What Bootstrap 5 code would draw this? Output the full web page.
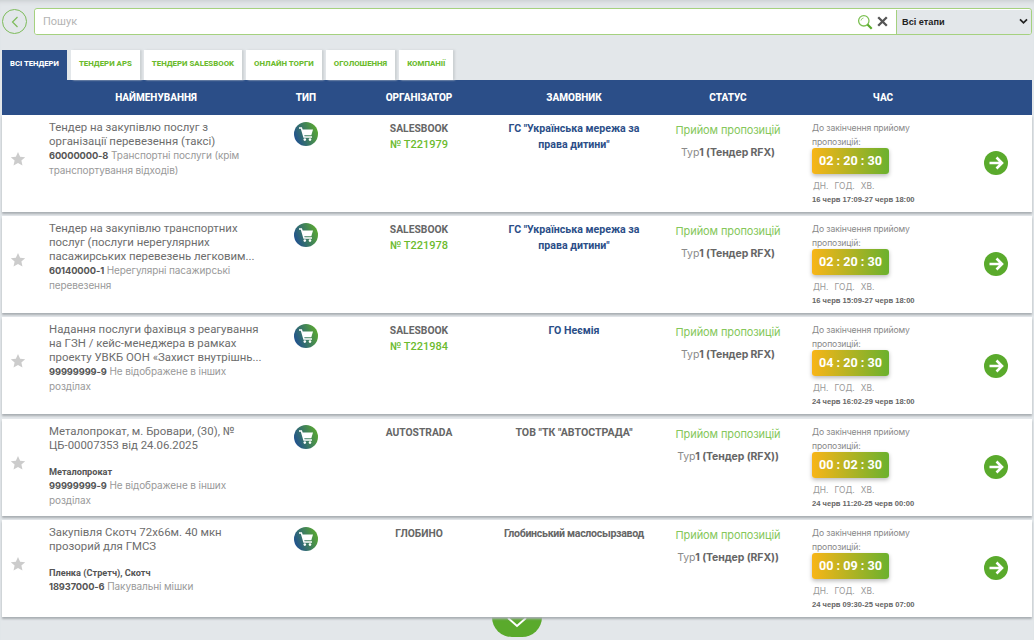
<!doctype html>
<html lang="uk">
<head>
<meta charset="utf-8">
<title>Тендери</title>
<link href="https://cdn.jsdelivr.net/npm/bootstrap@5.3.0/dist/css/bootstrap.min.css" rel="stylesheet">
<style>
html,body{height:640px;overflow:hidden}
body{background:#e3e7ea;font-family:Roboto,sans-serif;color:#666;box-shadow:inset 0 5px 5px -4px #c5c9cc}
.page{padding:8px 2px 0}
.back{width:25px;height:25px;border:1.5px solid #7dbb5a;border-radius:50%;flex:none;margin:1px 7px 0 0;background:transparent;padding:0}
.search{height:27px;border:1.5px solid #a5d17f;border-radius:3px;background:#fff;overflow:hidden}
.search .form-control{border:0;border-radius:0;height:24px;font-size:11px;padding:0 8px;box-shadow:none;font-family:Roboto,sans-serif}
.search .form-control::placeholder{color:#b4b4b4}
.search .form-select{flex:none;width:135px;height:24px;border:0;border-left:1.5px solid #a5d17f;border-radius:0;background-color:#e3e7ea;background-image:url("data:image/svg+xml,%3Csvg xmlns='http://www.w3.org/2000/svg' viewBox='0 0 10 8'%3E%3Cpath d='M1 1.5l4 4 4-4' fill='none' stroke='%23222' stroke-width='2'/%3E%3C/svg%3E");font:700 9.2px "Liberation Sans",sans-serif;color:#222;padding:0 5px;background-position:right 3px center;background-size:9px 7px;box-shadow:none}
.search svg{flex:none}
.tabs{margin-top:15px;gap:4px;height:30px}
.tabs .nav-link{height:30px;padding:0 8px;font:800 7.85px/28px Roboto,sans-serif;color:#6bbb2e;background:#fff;border-radius:0;text-transform:uppercase;box-shadow:2px 0 2px #ccd0d3}
.tabs .nav-link.active{background:#2b4e88;color:#fff;box-shadow:none;padding:0 8px 0 8px;font-size:7.7px}
.thead{height:35px;background:#2b4e88;color:#fff;font-weight:800;font-size:10px;line-height:35px;text-align:center}
.c0{width:38px;flex:none}.c1{width:232px;flex:none}.c2{width:68px;flex:none}.c3{width:158px;flex:none}.c4{width:152px;flex:none}.c5{width:156px;flex:none}.c6{width:154px;flex:none}.c7{flex:1 1 0}
.trow{height:97px;margin-bottom:4.2px;background:#fff;box-shadow:0 2px 2px #a9aeb2}
.star{display:flex;align-items:center;justify-content:center;height:88px;color:#ccc}
.star svg{margin-left:-6px}
.name{padding:5px 0 0 9px;white-space:nowrap;font-size:11.4px;line-height:14px;color:#6d6d6d}
.name .sub{font:700 9.2px/13px Roboto,sans-serif;color:#555;margin-top:13px;display:block}
.cpv{font:400 10px/14px Inter,sans-serif;color:#999;letter-spacing:-.1px;display:block}
.cpv b{color:#555;font-weight:700;font-size:9.3px}
.type{padding:6px 0 0 22px}
.org{text-align:center;padding-top:7px;font-weight:700;font-size:10.3px;line-height:13px;color:#666}
.org span{display:block;margin-top:2px;font-size:11px;line-height:15px;font-weight:500;color:#6cbb2e}
.cust{text-align:center;padding:6px 4px 0;font-weight:700;font-size:10.6px;line-height:16px;color:#2b4e88}
.cust.g{color:#666;white-space:nowrap;padding:6px 0 0}
.cust.tight{letter-spacing:-.3px}
.stat{text-align:center;padding-top:7px}
.stat .st{font:400 11px/16px Inter,sans-serif;color:#85c75a;letter-spacing:-.1px}
.stat .tur{font:400 10.5px/14px Inter,sans-serif;color:#8a8a8a;margin-top:8px;letter-spacing:-.1px}
.stat .tur b{color:#666;font-weight:700}
.time{padding:6px 0 0 6px}
.time p{margin:0;font:400 8.6px/14px Inter,sans-serif;color:#888;white-space:nowrap;letter-spacing:-.1px}
.timer{width:77px;height:26px;margin-top:-1px;border-radius:3px;background:linear-gradient(90deg,#f8b518,#6bb12e);color:#fff;font-weight:700;font-size:12.6px;line-height:26px;text-align:center;box-shadow:0 2px 4px #bbb}
.lbl{font:400 8.4px/12px Inter,sans-serif;color:#999;margin-top:6px;padding-left:1px;white-space:nowrap}
.lbl span{margin-right:6px}
.dates{font:700 7.6px/12px "Liberation Sans",Roboto,sans-serif;color:#666;margin-top:2px;white-space:nowrap}
.go{padding:35.5px 0 0 24px}
.more{width:50px;height:20px;margin:-4px auto 0;background:#5aaa2c;border-radius:0 0 25px 25px;position:relative;z-index:0}
.list{position:relative;z-index:1}
</style>
</head>
<body>
<svg width="0" height="0" class="position-absolute">
<defs>
<linearGradient id="cg" x1="0" y1=".7" x2="1" y2=".3"><stop offset="0" stop-color="#1f4e92"/><stop offset="1" stop-color="#5aa92f"/></linearGradient>
<symbol id="cart" viewBox="0 0 24 24"><circle cx="12" cy="12" r="12" fill="url(#cg)"/><path d="M5 6h2.4l2.6 9h8" fill="none" stroke="#fff" stroke-width="1.5"/><path d="M8 7.5h11l-1.7 5.7H9.6z" fill="#fff"/><circle cx="10.8" cy="17.6" r="1.3" fill="#fff"/><circle cx="16" cy="17.6" r="1.3" fill="#fff"/></symbol>
<symbol id="star" viewBox="0 0 24 24"><path d="M12 1.5l3.2 7 7.6.8-5.7 5.1 1.6 7.5L12 18.1l-6.7 3.8 1.6-7.5L1.2 9.3l7.6-.8z" fill="#ccc"/></symbol>
<symbol id="go" viewBox="0 0 24 24"><circle cx="12" cy="12" r="12" fill="#5aaa2c"/><path d="M5.5 12h12M12.5 6.5l5.5 5.5-5.5 5.5" fill="none" stroke="#fff" stroke-width="2.6"/></symbol>
</defs>
</svg>
<div class="page">
  <div class="d-flex">
    <button class="back d-flex align-items-center justify-content-center" type="button" aria-label="Назад"><svg width="8" height="12" viewBox="0 0 8 12"><path d="M6.5 1L1.5 6l5 5" fill="none" stroke="#7dbb5a" stroke-width="1.2"/></svg></button>
    <div class="search d-flex align-items-center flex-grow-1">
      <input class="form-control" placeholder="Пошук">
      <svg class="me-1" width="16" height="16" viewBox="0 0 16 16"><circle cx="6.8" cy="6.8" r="5.2" fill="none" stroke="#7cc052" stroke-width="1.3"/><path d="M4 6.5A3 3 0 0 1 6.5 4" fill="none" stroke="#9fd47c"/><path d="M10.5 10.5l4.2 4.2" stroke="#5aaa2c" stroke-width="2.2"/></svg>
      <svg class="me-2" width="11" height="11" viewBox="0 0 11 11"><path d="M1.2 1.2l8.6 8.6M9.8 1.2l-8.6 8.6" stroke="#555" stroke-width="2.3"/></svg>
      <select class="form-select"><option>Всі етапи</option></select>
    </div>
  </div>
  <ul class="nav tabs">
    <li class="nav-item"><a class="nav-link active" href="#">Всі тендери</a></li>
    <li class="nav-item"><a class="nav-link" href="#">Тендери APS</a></li>
    <li class="nav-item"><a class="nav-link" href="#">Тендери Salesbook</a></li>
    <li class="nav-item"><a class="nav-link" href="#">Онлайн торги</a></li>
    <li class="nav-item"><a class="nav-link" href="#">Оголошення</a></li>
    <li class="nav-item"><a class="nav-link" href="#">Компанії</a></li>
  </ul>
  <div class="thead d-flex">
    <div class="c0"></div><div class="c1">НАЙМЕНУВАННЯ</div><div class="c2">ТИП</div><div class="c3">ОРГАНІЗАТОР</div><div class="c4">ЗАМОВНИК</div><div class="c5">СТАТУС</div><div class="c6">ЧАС</div><div class="c7"></div>
  </div>
  <div class="list">

  <div class="trow d-flex">
    <div class="c0 star"><svg width="16" height="16"><use href="#star"/></svg></div>
    <div class="c1 name">Тендер на закупівлю послуг з<br>організації перевезення (таксі)<span class="cpv"><b>60000000-8</b> Транспортні послуги (крім<br>транспортування відходів)</span></div>
    <div class="c2 type"><svg width="24" height="24"><use href="#cart"/></svg></div>
    <div class="c3 org">SALESBOOK<span>№ T221979</span></div>
    <div class="c4 cust">ГС "Українська мережа за права дитини"</div>
    <div class="c5 stat"><div class="st">Прийом пропозицій</div><div class="tur">Тур<b>1 (Тендер RFX)</b></div></div>
    <div class="c6 time"><p>До закінчення прийому<br>пропозицій:</p><div class="timer">02 : 20 : 30</div><div class="lbl"><span>ДН.</span><span>ГОД.</span><span>ХВ.</span></div><div class="dates">16 черв 17:09-27 черв 18:00</div></div>
    <div class="c7 go"><svg width="24" height="24"><use href="#go"/></svg></div>
  </div>

  <div class="trow d-flex">
    <div class="c0 star"><svg width="16" height="16"><use href="#star"/></svg></div>
    <div class="c1 name">Тендер на закупівлю транспортних<br>послуг (послуги нерегулярних<br>пасажирських перевезень легковим...<span class="cpv"><b>60140000-1</b> Нерегулярні пасажирські<br>перевезення</span></div>
    <div class="c2 type"><svg width="24" height="24"><use href="#cart"/></svg></div>
    <div class="c3 org">SALESBOOK<span>№ T221978</span></div>
    <div class="c4 cust">ГС "Українська мережа за права дитини"</div>
    <div class="c5 stat"><div class="st">Прийом пропозицій</div><div class="tur">Тур<b>1 (Тендер RFX)</b></div></div>
    <div class="c6 time"><p>До закінчення прийому<br>пропозицій:</p><div class="timer">02 : 20 : 30</div><div class="lbl"><span>ДН.</span><span>ГОД.</span><span>ХВ.</span></div><div class="dates">16 черв 15:09-27 черв 18:00</div></div>
    <div class="c7 go"><svg width="24" height="24"><use href="#go"/></svg></div>
  </div>

  <div class="trow d-flex">
    <div class="c0 star"><svg width="16" height="16"><use href="#star"/></svg></div>
    <div class="c1 name">Надання послуги фахівця з реагування<br>на ГЗН / кейс-менеджера в рамках<br>проекту УВКБ ООН «Захист внутрішнь...<span class="cpv"><b>99999999-9</b> Не відображене в інших<br>розділах</span></div>
    <div class="c2 type"><svg width="24" height="24"><use href="#cart"/></svg></div>
    <div class="c3 org">SALESBOOK<span>№ T221984</span></div>
    <div class="c4 cust">ГО Неємія</div>
    <div class="c5 stat"><div class="st">Прийом пропозицій</div><div class="tur">Тур<b>1 (Тендер RFX)</b></div></div>
    <div class="c6 time"><p>До закінчення прийому<br>пропозицій:</p><div class="timer">04 : 20 : 30</div><div class="lbl"><span>ДН.</span><span>ГОД.</span><span>ХВ.</span></div><div class="dates">24 черв 16:02-29 черв 18:00</div></div>
    <div class="c7 go"><svg width="24" height="24"><use href="#go"/></svg></div>
  </div>

  <div class="trow d-flex">
    <div class="c0 star"><svg width="16" height="16"><use href="#star"/></svg></div>
    <div class="c1 name">Металопрокат, м. Бровари, (30), №<br>ЦБ-00007353 від 24.06.2025<span class="sub">Металопрокат</span><span class="cpv"><b>99999999-9</b> Не відображене в інших<br>розділах</span></div>
    <div class="c2 type"><svg width="24" height="24"><use href="#cart"/></svg></div>
    <div class="c3 org">AUTOSTRADA</div>
    <div class="c4 cust g">ТОВ "ТК "АВТОСТРАДА"</div>
    <div class="c5 stat"><div class="st">Прийом пропозицій</div><div class="tur">Тур<b>1 (Тендер (RFX))</b></div></div>
    <div class="c6 time"><p>До закінчення прийому<br>пропозицій:</p><div class="timer">00 : 02 : 30</div><div class="lbl"><span>ДН.</span><span>ГОД.</span><span>ХВ.</span></div><div class="dates">24 черв 11:20-25 черв 00:00</div></div>
    <div class="c7 go"><svg width="24" height="24"><use href="#go"/></svg></div>
  </div>

  <div class="trow d-flex">
    <div class="c0 star"><svg width="16" height="16"><use href="#star"/></svg></div>
    <div class="c1 name">Закупівля Скотч 72х66м. 40 мкн<br>прозорий для ГМСЗ<span class="sub">Пленка (Стретч), Скотч</span><span class="cpv"><b>18937000-6</b> Пакувальні мішки</span></div>
    <div class="c2 type"><svg width="24" height="24"><use href="#cart"/></svg></div>
    <div class="c3 org">ГЛОБИНО</div>
    <div class="c4 cust g tight">Глобинський маслосырзавод</div>
    <div class="c5 stat"><div class="st">Прийом пропозицій</div><div class="tur">Тур<b>1 (Тендер (RFX))</b></div></div>
    <div class="c6 time"><p>До закінчення прийому<br>пропозицій:</p><div class="timer">00 : 09 : 30</div><div class="lbl"><span>ДН.</span><span>ГОД.</span><span>ХВ.</span></div><div class="dates">24 черв 09:30-25 черв 07:00</div></div>
    <div class="c7 go"><svg width="24" height="24"><use href="#go"/></svg></div>
  </div>
  </div>
  <div class="more d-flex justify-content-center"><svg width="22" height="12" viewBox="0 0 22 12"><path d="M2 1l9 8 9-8" fill="none" stroke="#fff" stroke-width="2"/></svg></div>
</div>
<script src="https://cdn.jsdelivr.net/npm/bootstrap@5.3.0/dist/js/bootstrap.bundle.min.js"></script>
</body>
</html>
